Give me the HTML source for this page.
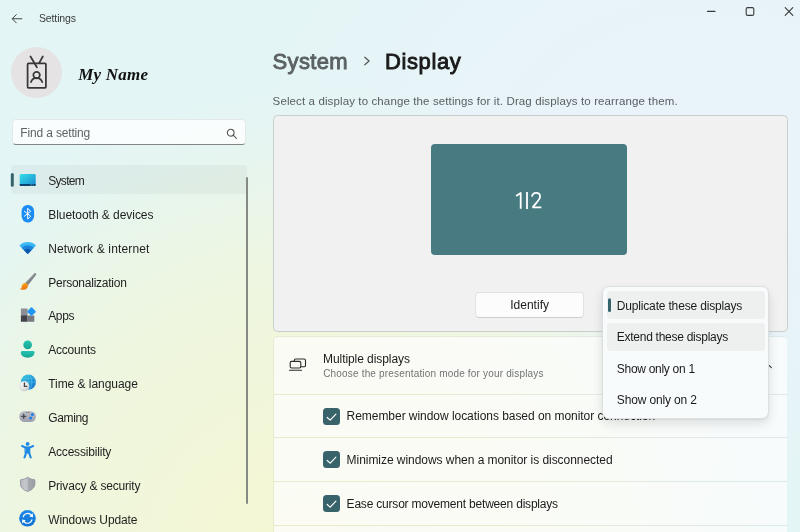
<!DOCTYPE html>
<html>
<head>
<meta charset="utf-8">
<title>Settings</title>
<style>
*{box-sizing:border-box;margin:0;padding:0}
html,body{width:800px;height:532px;overflow:hidden}
body{font-family:"Liberation Sans",sans-serif;color:#1b1b1b;position:relative;
background:
 radial-gradient(ellipse 480px 480px at 300px 565px, rgba(246,247,208,.92) 0%, rgba(246,247,208,.86) 15%, rgba(246,247,208,.66) 48%, rgba(246,247,208,.5) 65%, rgba(246,247,208,.3) 78%, rgba(246,247,208,.1) 89%, rgba(246,247,208,0) 100%),
 radial-gradient(ellipse 520px 360px at 720px 150px, rgba(234,243,250,1) 0%, rgba(234,243,250,.75) 45%, rgba(234,243,250,0) 100%),
 #e3f5f5;
}
.abs{position:absolute}
.t{position:absolute;white-space:nowrap;line-height:1}
#root{position:absolute;left:0;top:0;width:800px;height:532px;will-change:transform}
#av{left:11.300px;top:47.400px;width:50.700px;height:50.700px;border-radius:50%;background:#e5e3e3}
#name{left:78.300px;top:65.500px;letter-spacing:.2px;font-family:"Liberation Serif",serif;font-weight:bold;font-style:italic;font-size:17px;color:#111}
#search{left:11.800px;top:119.300px;width:234.400px;height:26.200px;border-radius:4px;background:rgba(255,255,255,.78);border:1px solid #e4e9e8;border-bottom:1px solid #848686}
#navsel{left:11px;top:164.900px;width:236px;height:29.500px;border-radius:4px;background:rgba(0,0,0,.036)}
#scroll{left:245.900px;top:176.800px;width:1.800px;height:327.400px;background:#858a84;border-radius:1px}
#panel{left:273.100px;top:114.800px;width:514.700px;height:217.700px;border-radius:4.500px;background:#f1f1f1;border:1px solid #c8d0ce}
#mon{left:431px;top:144px;width:196px;height:111px;border-radius:4px;background:#487b81}
#ident{left:475px;top:292px;width:109px;height:26px;border-radius:4px;background:#fcfcfc;border:1px solid #e2e2e2;border-bottom-color:#cfcfcf}
#card{left:273.300px;top:336.200px;width:514.200px;height:210px;border-radius:5px 5px 0 0;background:rgba(0,0,0,.042)}
.row{position:absolute;left:274.200px;width:512.400px;background:rgba(255,255,255,.76)}
.cb{position:absolute;left:323px;width:17px;height:17px;border-radius:3.500px;background:#38636a}
.cb svg{position:absolute;left:0;top:0}
#dd{left:602px;top:286px;width:167px;height:133px;border-radius:7px;background:#f8fbfb;border:1px solid #dcdfdf;box-shadow:0 5px 11px rgba(0,0,0,.11),0 1px 2px rgba(0,0,0,.06)}
.ddi{position:absolute;left:607px;width:157.500px;height:27.700px;border-radius:4px;background:#eeefef}
</style>
</head>
<body>
<div id="root">
<!-- title bar -->
<svg class="abs" style="left:9.800px;top:11.650px" width="14" height="14" viewBox="0 0 14 14"><path d="M11.800 6.750H2.400M6.300 2.650 2.200 6.750l4.100 4.100" fill="none" stroke="#444" stroke-width="1" stroke-linecap="round" stroke-linejoin="round"/></svg>
<svg class="abs" style="left:700px;top:0" width="100" height="24" viewBox="0 0 100 24"><g fill="none" stroke="#3a3a3a" stroke-width="1.100" stroke-linecap="round"><path d="M7.400 11.400h7.600"/><rect x="46.200" y="7.600" width="7.600" height="7.800" rx="1.500"/><path d="M85.200 7.600l7.600 7.800M92.800 7.600 85.200 15.400"/></g></svg>

<!-- avatar -->
<div class="abs" id="av"></div>
<svg class="abs" style="left:24px;top:54px" width="26" height="38" viewBox="0 0 26 38"><g fill="none" stroke="#383838" stroke-width="1.750" stroke-linecap="round" stroke-linejoin="round"><rect x="3.600" y="9.300" width="18.300" height="24.600" rx=".9"/><path d="M6.500 2.500 12.900 13.300M18.800 2.500 15.100 9.100"/><circle cx="12.600" cy="21.100" r="3.250"/><path d="M7 28.100c.9-2.800 3-4.200 5.600-4.200s4.700 1.400 5.600 4.200"/></g></svg>
<div class="t" id="name">My Name</div>

<!-- search -->
<div class="abs" id="search"></div>
<svg class="abs" style="left:226.100px;top:127.500px" width="12" height="12" viewBox="0 0 12 12"><g fill="none" stroke="#555" stroke-width="1.050" stroke-linecap="round"><circle cx="4.700" cy="4.700" r="3.400"/><path d="M7.200 7.200 10.400 10.400"/></g></svg>

<!-- nav -->
<div class="abs" id="navsel"></div>
<svg class="abs" style="left:8px;top:170px" width="10" height="20" viewBox="8 170 10 20"><rect x="10.800" y="173.100" width="3" height="13.600" rx="1.500" fill="#35636b"/></svg>
<svg class="abs" style="left:0;top:160px" width="60" height="372" viewBox="0 160 60 372">
<defs>
<linearGradient id="gsys" x1="0" y1="0" x2="1" y2="1"><stop offset="0" stop-color="#38dde8"/><stop offset=".5" stop-color="#27b4dc"/><stop offset="1" stop-color="#1886cc"/></linearGradient>
<linearGradient id="gwifi" x1="0" y1="0" x2="0" y2="1"><stop offset="0" stop-color="#3dbcf4"/><stop offset="1" stop-color="#2ea6ee"/></linearGradient>
<linearGradient id="gbrush" x1="0" y1="0" x2="1" y2="1"><stop offset=".25" stop-color="#a0a5a9"/><stop offset=".75" stop-color="#6a6f74"/></linearGradient>
<linearGradient id="gtip" x1="0" y1="0" x2=".4" y2="1"><stop offset="0" stop-color="#fdb21c"/><stop offset="1" stop-color="#ee7412"/></linearGradient>
<linearGradient id="gacc" x1="0" y1="0" x2="0" y2="1"><stop offset="0" stop-color="#24c5b1"/><stop offset="1" stop-color="#16a492"/></linearGradient>
<linearGradient id="gglobe" x1="0" y1="0" x2="1" y2="1"><stop offset="0" stop-color="#2cc3dc"/><stop offset="1" stop-color="#1873d1"/></linearGradient>
<linearGradient id="gpad" x1="0" y1="0" x2="0" y2="1"><stop offset="0" stop-color="#bec1ca"/><stop offset="1" stop-color="#9da0ab"/></linearGradient>
<linearGradient id="gsh" x1="0" y1="0" x2="1" y2="0"><stop offset="0" stop-color="#b4b7bd"/><stop offset=".3" stop-color="#c7c9cf"/><stop offset=".5" stop-color="#bcbfc5"/><stop offset=".5" stop-color="#a8abb1"/><stop offset="1" stop-color="#9a9da3"/></linearGradient>
<radialGradient id="gclock" cx=".35" cy=".3" r=".8"><stop offset="0" stop-color="#f6f6f6"/><stop offset=".6" stop-color="#e2e2e2"/><stop offset="1" stop-color="#c2c2c4"/></radialGradient>
<linearGradient id="gupd" x1="0" y1="0" x2="0" y2="1"><stop offset="0" stop-color="#1e8ae6"/><stop offset="1" stop-color="#1272d4"/></linearGradient>
</defs>
<!-- system -->
<rect x="19.700" y="173.900" width="16" height="12.200" rx="1.400" fill="url(#gsys)"/>
<path d="M19.700 184h16v.8c0 .7-.6 1.300-1.400 1.300H21.100c-.8 0-1.400-.6-1.400-1.300z" fill="#0a4370"/>
<path d="M30.300 185h1.800M32.700 185h1.200" stroke="#6aa9d0" stroke-width=".8"/>
<!-- bluetooth -->
<rect x="21.600" y="205" width="12.500" height="17.400" rx="5.900" ry="6.400" fill="#1b8bf6"/>
<path d="M24.400 211.300 30.700 216.200 27.700 219.200V208.300L30.700 211.300 24.400 216.200" fill="none" stroke="#fff" stroke-width="1" stroke-linejoin="round" stroke-linecap="round"/>
<!-- wifi -->
<path d="M27.700 253.900 19.360 245.460a11.800 11.800 0 0 1 16.680 0z" fill="url(#gwifi)"/>
<path d="M27.700 253.900 21.620 247.820a8.600 8.600 0 0 1 12.160 0z" fill="#1c86dc"/>
<path d="M27.700 253.900 24.020 250.220a5.200 5.200 0 0 1 7.360 0z" fill="#0d58ae"/>
<!-- brush -->
<path d="M24.800 283.200 34.200 273.600c.6-.6 1.500-.6 1.800-.2.400.4.300 1.100-.2 1.800L27.600 285.800z" fill="url(#gbrush)"/>
<path d="M19.600 289.100c1.400-.5 1.900-1.400 2.100-2.700.4-2.100 1.700-3.500 3.400-3.500 1.600 0 2.700 1.200 2.800 2.800.1 2.400-2.200 4.100-4.900 4.100-1.400 0-2.600-.2-3.400-.7z" fill="url(#gtip)"/>
<!-- apps -->
<rect x="20.900" y="308.600" width="6.700" height="6.600" rx=".5" fill="#8d8d95"/>
<rect x="20.900" y="315.200" width="6.700" height="6.600" rx=".5" fill="#424248"/>
<rect x="27.600" y="315.600" width="6.700" height="6.200" rx=".5" fill="#787880"/>
<rect x="28.250" y="308.300" width="6.500" height="6.500" rx=".9" transform="rotate(45 31.500 311.550)" fill="#2196f3"/>
<!-- accounts -->
<circle cx="27.650" cy="344.800" r="4.350" fill="url(#gacc)"/>
<path d="M22.300 351h10.700c.8 0 1.500.7 1.500 1.500 0 3-2.900 5.200-6.850 5.200s-6.850-2.200-6.850-5.200c0-.8.700-1.500 1.500-1.500z" fill="url(#gacc)"/>
<!-- time -->
<circle cx="28.400" cy="382.100" r="7.600" fill="url(#gglobe)"/>
<g fill="none" stroke="#8fe3f2" stroke-width=".55" opacity=".55"><ellipse cx="28.400" cy="382.100" rx="3.300" ry="7.600"/><path d="M20.800 382.100h15.200M21.900 378.300h13M28.400 374.500v15.200"/></g>
<circle cx="24.200" cy="386.200" r="5.150" fill="url(#gclock)"/>
<path d="M24.400 383v3.400h2.300" fill="none" stroke="#45454a" stroke-width="1.300" stroke-linecap="round" stroke-linejoin="round"/>
<!-- gaming -->
<rect x="19.200" y="411" width="16.800" height="11" rx="5.500" fill="url(#gpad)"/>
<path d="M21.600 416.300h4.200M23.700 414.200v4.200" stroke="#474850" stroke-width="1.250" stroke-linecap="round"/>
<path d="M26.200 412.500h.9M27.900 412.500h1.500" stroke="#62646c" stroke-width=".8"/>
<circle cx="32.400" cy="414.600" r="1.500" fill="#1e7fe8"/><circle cx="30.600" cy="418" r="1.500" fill="#1e7fe8"/>
<!-- accessibility -->
<g fill="#1e88e6" stroke="#1e88e6" stroke-linecap="round" stroke-linejoin="round">
<circle cx="27.600" cy="443.900" r="1.950" stroke="none"/>
<path d="M22 446 25.800 447.600h3.600L33.200 446" fill="none" stroke-width="2"/>
<path d="M25.400 447.400h4.400v5.600h-4.400z" stroke-width="1"/>
<path d="M26.100 452.800 24.500 457.500M29.100 452.800 30.700 457.500" fill="none" stroke-width="2.100"/>
</g>
<!-- privacy -->
<path d="M27.650 477.200c2.100 1.600 4.300 2.300 6.500 2.400.4 0 .7.300.7.700v3.200c0 3.700-2.500 6.400-7.200 7.900-4.700-1.500-7.200-4.200-7.200-7.900v-3.200c0-.4.300-.7.700-.7 2.200-.1 4.400-.8 6.500-2.400z" fill="url(#gsh)" stroke="#8f9298" stroke-width=".9" stroke-linejoin="round"/>
<!-- update -->
<circle cx="27.500" cy="518.300" r="8.300" fill="url(#gupd)"/>
<g fill="none" stroke="#fff" stroke-width="1.150" stroke-linecap="round"><path d="M23.200 516.800A4.600 4.600 0 0 1 31.400 515.400"/><path d="M31.900 519.900A4.600 4.600 0 0 1 23.700 521.300"/></g>
<path d="M32.800 513.300 33 517.300 29.400 516.500z" fill="#fff"/><path d="M22.300 523.400 22.100 519.400 25.700 520.200z" fill="#fff"/>
</svg>

<div class="abs" id="scroll"></div>

<!-- main -->
<svg class="abs" style="left:362px;top:55.300px" width="10" height="12" viewBox="0 0 10 12"><path d="M2.800 2.200 7.100 6 2.800 9.800" fill="none" stroke="#4f5557" stroke-width="1.200" stroke-linecap="round" stroke-linejoin="round"/></svg>

<div class="abs" id="panel"></div>
<div class="abs" id="mon"></div>
<svg class="abs" style="left:510px;top:188px" width="38" height="26" viewBox="0 0 38 26"><g fill="none" stroke="#fff" stroke-width="1.800" stroke-linecap="butt" stroke-linejoin="miter"><path d="M6.100 8 10.700 4.900V20.700" stroke-linejoin="round"/><path d="M17 3.900V21"/><path d="M22 8.600C22.300 6.200 24 4.850 26.100 4.850c2.400 0 4 1.500 4 3.750 0 1.900-1 3.400-3.100 5.500L22.600 19.400h8.700" stroke-miterlimit="2"/></g></svg>
<div class="abs" id="ident"></div>

<div class="abs" id="card"></div>
<div class="row" style="top:337.100px;height:56.700px;border-radius:4px 4px 0 0"></div>
<div class="row" style="top:394.900px;height:42.300px"></div>
<div class="row" style="top:438.300px;height:42.600px"></div>
<div class="row" style="top:482px;height:42.600px"></div>
<div class="row" style="top:525.700px;height:20px"></div>
<svg class="abs" style="left:288px;top:357px" width="20" height="16" viewBox="0 0 20 16"><g fill="none" stroke="#2a2a2a" stroke-width="1.100" stroke-linejoin="round" stroke-linecap="round"><path d="M6.300 4.200V3.400c0-.8.600-1.400 1.400-1.400h8.400c.8 0 1.400.6 1.400 1.400v5c0 .8-.6 1.400-1.400 1.400H13"/><rect x="2.200" y="4.400" width="10.600" height="6.600" rx="1.400"/><path d="M1.500 13.300H13.500"/></g></svg>
<div class="cb" style="top:407.800px"><svg width="17" height="17" viewBox="0 0 17 17"><path d="M4.200 9.500 7.200 12.100 12.900 6.100" fill="none" stroke="#fff" stroke-width="1.200" stroke-linecap="round" stroke-linejoin="round"/></svg></div>
<div class="cb" style="top:451.450px"><svg width="17" height="17" viewBox="0 0 17 17"><path d="M4.200 9.500 7.200 12.100 12.900 6.100" fill="none" stroke="#fff" stroke-width="1.200" stroke-linecap="round" stroke-linejoin="round"/></svg></div>
<div class="cb" style="top:495.100px"><svg width="17" height="17" viewBox="0 0 17 17"><path d="M4.200 9.500 7.200 12.100 12.900 6.100" fill="none" stroke="#fff" stroke-width="1.200" stroke-linecap="round" stroke-linejoin="round"/></svg></div>
<svg class="abs" style="left:759px;top:360px" width="14" height="10" viewBox="0 0 14 10"><path d="M1.600 7.700 7 2.700 12.400 7.700" fill="none" stroke="#3a3a3a" stroke-width="1.100" stroke-linecap="round" stroke-linejoin="round"/></svg>
<div class="t" style="left:39.0px;top:13.00px;font-size:10.5px;letter-spacing:-0.136px;color:#3a3a3a;">Settings</div>
<div class="t" style="left:20.3px;top:127.00px;font-size:12px;letter-spacing:-0.157px;color:#5f6363;">Find a setting</div>
<div class="t" style="left:48.2px;top:175.00px;font-size:12px;letter-spacing:-0.683px;color:#1f1f1f;">System</div>
<div class="t" style="left:48.2px;top:209.00px;font-size:12px;letter-spacing:-0.043px;color:#1f1f1f;">Bluetooth &amp; devices</div>
<div class="t" style="left:48.2px;top:243.00px;font-size:12px;letter-spacing:0.146px;color:#1f1f1f;">Network &amp; internet</div>
<div class="t" style="left:48.2px;top:277.00px;font-size:12px;letter-spacing:-0.240px;color:#1f1f1f;">Personalization</div>
<div class="t" style="left:48.2px;top:310.00px;font-size:12px;letter-spacing:-0.320px;color:#1f1f1f;">Apps</div>
<div class="t" style="left:48.2px;top:344.00px;font-size:12px;letter-spacing:-0.208px;color:#1f1f1f;">Accounts</div>
<div class="t" style="left:48.2px;top:378.00px;font-size:12px;letter-spacing:-0.042px;color:#1f1f1f;">Time &amp; language</div>
<div class="t" style="left:48.2px;top:412.00px;font-size:12px;letter-spacing:-0.346px;color:#1f1f1f;">Gaming</div>
<div class="t" style="left:48.2px;top:446.00px;font-size:12px;letter-spacing:-0.188px;color:#1f1f1f;">Accessibility</div>
<div class="t" style="left:48.2px;top:480.00px;font-size:12px;letter-spacing:-0.180px;color:#1f1f1f;">Privacy &amp; security</div>
<div class="t" style="left:48.2px;top:514.00px;font-size:12px;letter-spacing:-0.109px;color:#1f1f1f;">Windows Update</div>
<div class="t" style="left:272.5px;top:51.00px;font-size:22px;letter-spacing:0.368px;color:#5b6163;-webkit-text-stroke:.9px #5b6163">System</div>
<div class="t" style="left:385.0px;top:51.00px;font-size:22px;letter-spacing:0.610px;color:#1a1a1a;-webkit-text-stroke:.9px #1a1a1a">Display</div>
<div class="t" style="left:272.6px;top:96.00px;font-size:11.5px;letter-spacing:0.118px;color:#5a5f60;">Select a display to change the settings for it. Drag displays to rearrange them.</div>
<div class="t" style="left:510.2px;top:299.00px;font-size:12px;letter-spacing:0.014px;color:#1b1b1b;">Identify</div>
<div class="t" style="left:323.0px;top:353.00px;font-size:12px;letter-spacing:-0.065px;color:#1b1b1b;">Multiple displays</div>
<div class="t" style="left:323.2px;top:369.00px;font-size:10px;letter-spacing:0.177px;color:#717474;">Choose the presentation mode for your displays</div>
<div class="t" style="left:346.6px;top:410.00px;font-size:12px;letter-spacing:-0.045px;color:#1b1b1b;">Remember window locations based on monitor connection</div>
<div class="t" style="left:346.6px;top:454.00px;font-size:12px;letter-spacing:-0.046px;color:#1b1b1b;">Minimize windows when a monitor is disconnected</div>
<div class="t" style="left:346.6px;top:498.00px;font-size:12px;letter-spacing:-0.202px;color:#1b1b1b;">Ease cursor movement between displays</div>

<!-- dropdown -->
<div class="abs" id="dd"></div>
<div class="ddi" style="top:291.200px"></div>
<div class="ddi" style="top:322.900px"></div>
<svg class="abs" style="left:605px;top:295px" width="10" height="20" viewBox="605 295 10 20"><rect x="608" y="298.200" width="3" height="13.700" rx="1.500" fill="#35636b"/></svg>
<div class="t" style="left:616.8px;top:300.00px;font-size:12px;letter-spacing:-0.170px;color:#1b1b1b;">Duplicate these displays</div>
<div class="t" style="left:616.8px;top:331.00px;font-size:12px;letter-spacing:-0.267px;color:#1b1b1b;">Extend these displays</div>
<div class="t" style="left:616.8px;top:363.00px;font-size:12px;letter-spacing:-0.289px;color:#1b1b1b;">Show only on 1</div>
<div class="t" style="left:616.8px;top:394.00px;font-size:12px;letter-spacing:-0.143px;color:#1b1b1b;">Show only on 2</div>
</div>
</body>
</html>
